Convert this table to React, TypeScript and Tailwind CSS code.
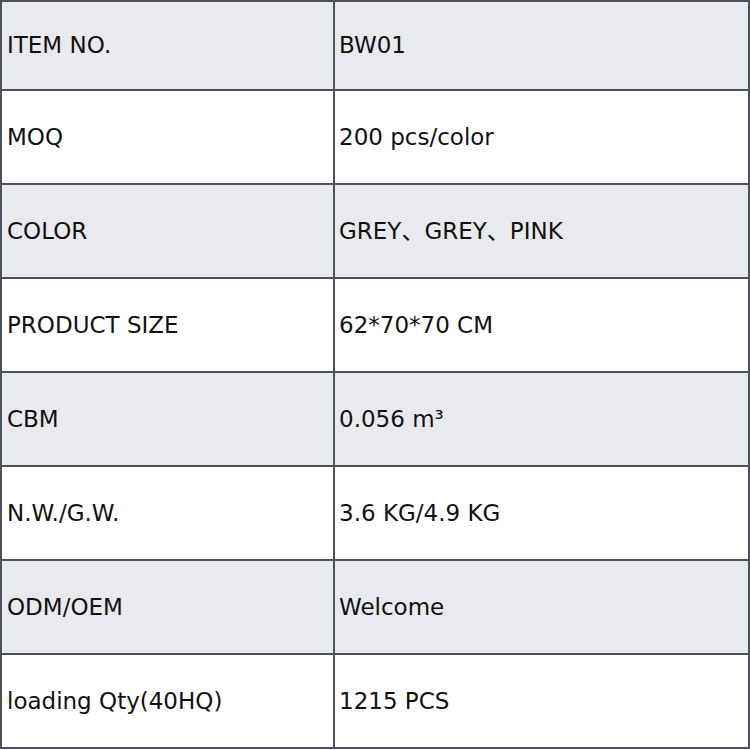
const rows: [string, string][] = [
  ["ITEM NO.", "BW01"],
  ["MOQ", "200 pcs/color"],
  ["COLOR", "GREY、GREY、PINK"],
  ["PRODUCT SIZE", "62*70*70 CM"],
  ["CBM", "0.056 m³"],
  ["N.W./G.W.", "3.6 KG/4.9 KG"],
  ["ODM/OEM", "Welcome"],
  ["loading Qty(40HQ)", "1215 PCS"],
]

export default function App() {
  return (
    <div
      className="w-[750px] h-[750px] bg-white text-[#111] text-[23px]"
      style={{ fontFamily: '"DejaVu Sans", "Noto Sans CJK SC", sans-serif' }}
    >
      <div className="w-[750px] border-2 border-[#4d515c] flex flex-col">
        {rows.map(([label, value], i) => (
          <div
            key={label}
            className={`grid grid-cols-[331px_1fr] ${
              i % 2 === 0 ? "bg-[#e9eaee]" : "bg-white"
            } ${i > 0 ? "h-[94px] border-t-2 border-[#4d515c]" : "h-[87px]"}`}
          >
            <div className="flex items-center pl-[5px]">{label}</div>
            <div className="flex items-center pl-[4px] border-l-2 border-[#4d515c]">{value}</div>
          </div>
        ))}
      </div>
    </div>
  )
}
